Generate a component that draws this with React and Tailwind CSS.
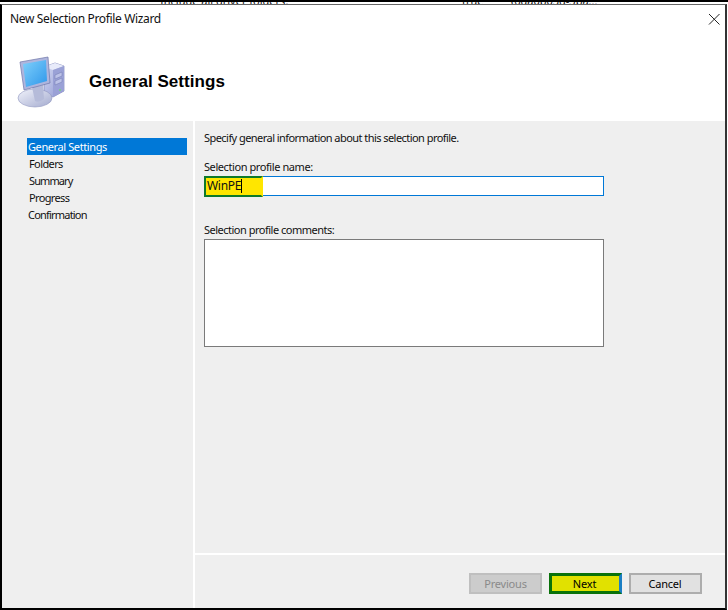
const font = "[font-family:'Noto_Sans',sans-serif]";

function ComputerIcon() {
  return (
    <svg width="54" height="54" viewBox="0 0 54 54" className="block">
      <defs>
        <linearGradient id="screen" x1="0" y1="0" x2="1" y2="1">
          <stop offset="0" stopColor="#7fd0fb" />
          <stop offset="1" stopColor="#2f97ea" />
        </linearGradient>
        <linearGradient id="tower" x1="0" y1="0" x2="1" y2="1">
          <stop offset="0" stopColor="#d7dcf5" />
          <stop offset="1" stopColor="#8e96d0" />
        </linearGradient>
        <linearGradient id="base" x1="0" y1="0" x2="1" y2="1">
          <stop offset="0" stopColor="#f1f3fb" />
          <stop offset="1" stopColor="#a4abcf" />
        </linearGradient>
      </defs>
      <path d="M29 12 L40 8 L49 11 L49 36 L38 42 L29 38 Z" fill="url(#tower)" stroke="#7d84b8" strokeWidth="0.7" />
      <path d="M29 12 L40 8 L49 11 L38 15 Z" fill="#e8ebfa" />
      <path d="M38 15 L49 11 L49 36 L38 42 Z" fill="#9aa1d6" />
      <path d="M40 20 L47 17 L47 21 L40 24 Z M40 26 L47 23 L47 27 L40 30 Z" fill="#bcc2e8" stroke="#7078b0" strokeWidth="0.5" />
      <circle cx="45" cy="35" r="1" fill="#74d67a" />
      <ellipse cx="20" cy="43" rx="17" ry="9" fill="url(#base)" stroke="#8f96bf" strokeWidth="0.6" />
      <path d="M17 32 L28 30 L29 44 Q24 48 20 46 Z" fill="#b5bbd9" />
      <path d="M5 7 L33 2 L35 28 L9 35 Z" fill="#aeb5dd" stroke="#6e76a8" strokeWidth="0.7" />
      <path d="M8 9 L31 5 L32 26 L11 32 Z" fill="url(#screen)" />
    </svg>
  );
}

function Btn({ children, className }) {
  return (
    <div className={`w-[73px] h-[21px] flex items-center justify-center text-[11px] tracking-[-0.2px] ${className}`}>
      {children}
    </div>
  );
}

export default function App() {
  return (
    <div className={`w-[728px] h-[610px] bg-white flex flex-col overflow-hidden text-[#111] text-[11px] tracking-[-0.4px] ${font}`}>
      <div className="h-[4px] bg-white relative overflow-hidden shrink-0 border-t-2 border-black">
        <div className="absolute left-[160px] top-[-9px] leading-[15px] tracking-[0px] whitespace-nowrap">Include all driver folders:</div>
        <div className="absolute left-[462px] top-[-9px] leading-[15px] tracking-[0px] whitespace-nowrap">true</div>
        <div className="absolute left-[510px] top-[-9px] leading-[15px] tracking-[0px] whitespace-nowrap">{"{6da0b03d-3ba..."}</div>
      </div>
      <div className="flex-1 mr-[1px] border-l-2 border-r-2 border-b-2 border-l-black border-r-[#333] border-b-black border-t border-t-[#666] flex flex-col min-h-0">
        <div className="h-[116px] shrink-0 bg-white relative">
          <div className="pl-[8px] pt-[6px] leading-[16px] text-[12px] tracking-[-0.35px]">New Selection Profile Wizard</div>
          <div className="flex items-center pl-[13px] mt-[28px]">
            <ComputerIcon />
            <div className="ml-[20px] text-[17px] font-bold tracking-[0.05px] text-black [font-family:'Liberation_Sans',sans-serif]">General Settings</div>
          </div>
          <svg width="13" height="13" viewBox="0 0 13 13" className="absolute right-[4px] top-[8px]">
            <path d="M1 1 L11.5 11.5 M11.5 1 L1 11.5" stroke="#222" strokeWidth="1" fill="none" />
          </svg>
        </div>
        <div className="flex-1 flex min-h-0 bg-white gap-[2px]">
          <div className="w-[191px] shrink-0 bg-[#efefef] pt-[17px] pl-[25px]">
            <div className="w-[160px] h-[17px] bg-[#0078d7] text-white pl-[1px] leading-[17px]">General Settings</div>
            <div className="h-[17px] pl-[2px] leading-[17px] tracking-[-0.6px]">Folders</div>
            <div className="h-[17px] pl-[2px] leading-[17px] tracking-[-0.9px]">Summary</div>
            <div className="h-[17px] pl-[2px] leading-[17px] tracking-[-0.65px]">Progress</div>
            <div className="h-[17px] pl-[1px] leading-[17px] tracking-[-0.8px]">Confirmation</div>
          </div>
          <div className="flex-1 flex flex-col gap-[2px] min-w-0">
            <div className="flex-1 bg-[#efefef] pl-[9px] pt-[9px]">
              <div className="leading-[16px] tracking-[-0.55px]">Specify general information about this selection profile.</div>
              <div className="mt-[13px] leading-[16px] tracking-[-0.42px]">Selection profile name:</div>
              <div className="relative w-[400px] h-[20px] mt-[1px] bg-white border border-[#0078d7]">
                <div className="absolute left-[-1px] top-[-1px] w-[59px] h-[21px] bg-[#ffe600] border-2 border-[#ffe600] border-l-[#0f7a2a] border-t-[#0f7a2a] border-b-[#0f7a2a]"></div>
                <div className="absolute left-[2px] top-[1px] leading-[16px] flex items-center text-[12px] tracking-[-0.3px]">
                  WinPE<span className="inline-block w-px h-[14px] bg-black"></span>
                </div>
              </div>
              <div className="mt-[26px] leading-[16px] tracking-[-0.5px]">Selection profile comments:</div>
              <div className="w-[400px] h-[108px] mt-[1px] bg-white border border-[#7a7a7a]"></div>
            </div>
            <div className="h-[53px] shrink-0 bg-[#efefef] flex justify-end gap-[7px] pt-[18px] pr-[23px]">
              <Btn className="bg-[#cccccc] border-2 border-[#bfbfbf] text-[#8a8a8a] pt-[1px]">Previous</Btn>
              <Btn className="bg-[#e1e100] border-[3px] border-[#0a720a] border-r-[#1b7fc4] text-black pt-[1px] pr-[2px]">Next</Btn>
              <Btn className="bg-[#e1e1e1] border-2 border-[#adadad] text-black pt-[1px] pr-[1px]">Cancel</Btn>
            </div>
          </div>
        </div>
      </div>
    </div>
  );
}
